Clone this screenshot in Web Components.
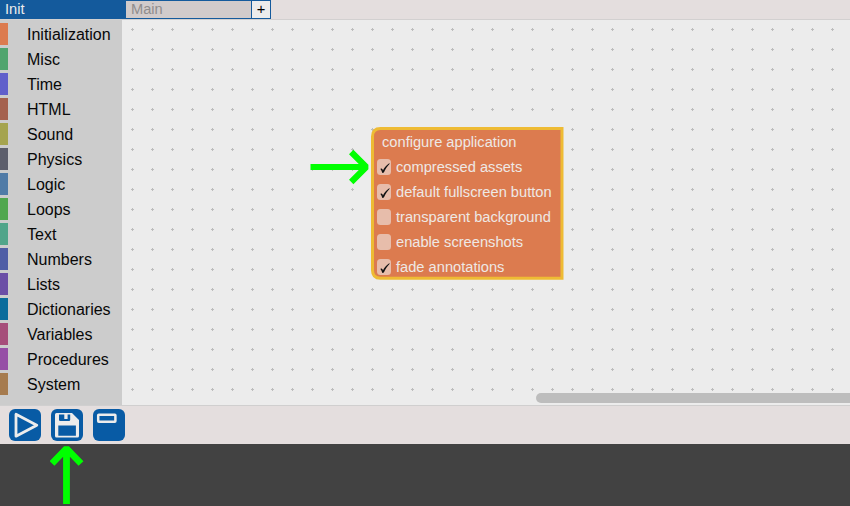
<!DOCTYPE html>
<html lang="en"><head><meta charset="utf-8"><title>Block editor</title>
<style>html,body{margin:0;height:100%;overflow:hidden;background:#424242}body{font-family:"Liberation Sans",Arial,sans-serif}</style>
</head><body>
<editor-app></editor-app>
<script>
class Base extends HTMLElement{
  constructor(){super();this.attachShadow({mode:'open'});}
  connectedCallback(){this.shadowRoot.innerHTML=this.render();}
}
customElements.define('tab-bar',class extends Base{render(){return `
<style>:host{display:flex;height:19px;background:#e4dede;border-bottom:1px solid #d2d0d0;font-size:14.67px;line-height:18px}
div{box-sizing:border-box;height:19px}
.on{width:125px;background:#145a9c;color:#ececec;padding-left:5px}
.off{width:127px;background:#d1cbcb;color:#8f8d8d;border:1px solid #145a9c;padding-left:5px;line-height:16px}
.add{width:19px;background:#ececec;color:#000;border:1px solid #145a9c;border-left:0;text-align:center;line-height:16px}
</style><div class="on">Init</div><div class="off">Main</div><div class="add">+</div>`}});

customElements.define('category-item',class extends Base{render(){return `
<style>:host{display:flex;height:22px;margin-bottom:3px;font-size:16px;line-height:24px;color:#080808;white-space:nowrap}
i{width:8px;height:22px;margin-right:19px;background:${this.getAttribute('color')}}</style><i></i><slot></slot>`}});

customElements.define('category-list',class extends Base{render(){
const c=[['Initialization','#dc7b4f'],['Misc','#50a56e'],['Time','#605fcb'],['HTML','#a5614e'],['Sound','#a5a44e'],['Physics','#5c5e6b'],['Logic','#507ba7'],['Loops','#50a74e'],['Text','#50a58a'],['Numbers','#4f5ea6'],['Lists','#6b4ea6'],['Dictionaries','#0a6c9c'],['Variables','#a64e7a'],['Procedures','#964fa6'],['System','#a67b4e']];
return `<style>:host{display:block;box-sizing:border-box;width:122px;height:386px;padding-top:3px;background:#ccc}</style>`+c.map(x=>`<category-item color="${x[1]}">${x[0]}</category-item>`).join('')}});

customElements.define('check-row',class extends Base{render(){return `
<style>:host{display:flex;align-items:center;height:25px;gap:5px;white-space:nowrap}
svg{display:block;width:14px;height:16px;background:#e7bdab;border-radius:3.5px}</style>
<svg viewBox="0 0 14 16">${this.hasAttribute('checked')?'<path d="M3.4 10C4.8 9 5.4 9.8 5.9 11.4C7.2 9 9 6.4 12.2 4.2L12.7 4.8C10.2 7.4 8.4 10 6.9 13.4L5.3 14C4.9 12.4 4.5 11.3 3.4 10Z" fill="#111"/>':''}</svg><slot></slot>`}});

customElements.define('config-block',class extends Base{render(){return `
<style>:host{display:block;box-sizing:border-box;width:192.5px;height:153px;color:#eee8e5;font-size:14.67px}
.shape{position:absolute;left:0;top:0}
.rows{position:relative;padding:3px 0 0 6.5px}
.title{height:24px;line-height:24px;padding-left:5px;white-space:nowrap}</style>
<svg class="shape" width="193" height="153"><path d="M9.5 1.5H191V151.3H9.5Q1.5 151.3 1.5 143.3V9.5Q1.5 1.5 9.5 1.5Z" fill="#dc7b4f" stroke="#eebb34" stroke-width="3"/></svg>
<div class="rows"><div class="title">configure application</div><slot></slot></div>`}});

customElements.define('block-canvas',class extends Base{render(){return `
<style>:host{display:block;position:relative;flex:1;height:385px;background:#ececec;overflow:hidden}
.grid{display:block;width:100%;height:100%}
config-block{position:absolute;left:248.5px;top:107px}
.bar{position:absolute;left:414.4px;right:-10px;top:373px;height:10px;border-radius:5px;background:#bdbdbd}</style>
<svg class="grid"><defs><pattern id="g" x="0" y="0" width="20" height="20" patternUnits="userSpaceOnUse"><path d="M9 9.5H12M10.5 8V11" stroke="#bdbdbd"/></pattern></defs><rect width="720" height="380" fill="url(#g)"/></svg>
<config-block><check-row checked>compressed assets</check-row><check-row checked>default fullscreen button</check-row><check-row>transparent background</check-row><check-row>enable screenshots</check-row><check-row checked>fade annotations</check-row></config-block>
<div class="bar"></div>`}});

customElements.define('tool-button',class extends Base{render(){
const p={run:'<path d="M7 5.3V27.2L27.8 16.2Z" fill="none" stroke="#ececec" stroke-width="2.8" stroke-linejoin="round"/>',
save:'<path fill="#ececec" fill-rule="evenodd" d="M5.5 4H21L28 11V27Q28 28.5 26.5 28.5H5.5Q4 28.5 4 27V5.5Q4 4 5.5 4ZM8 5.6V10.8Q8 12 9.2 12H18Q19.2 12 19.2 10.8V5.6H16.6V10H13.3V5.6ZM7.3 16.5V26.8H24.9V16.5Z"/>',
window:'<rect x="5.2" y="5.7" width="17.2" height="7" rx=".6" fill="none" stroke="#ececec" stroke-width="2.5"/>'};
return `<style>:host{display:block;width:32px;height:32px;background:#085ba5;border-radius:6px}svg{display:block}</style><svg width="32" height="32" viewBox="0 0 32 32">${p[this.getAttribute('kind')]}</svg>`}});

customElements.define('tool-bar',class extends Base{render(){return `
<style>:host{display:flex;box-sizing:border-box;height:39px;gap:10px;padding:3px 9px;border-top:1px solid #d0cfcf;background:#e4dede}</style>
<tool-button kind="run"></tool-button><tool-button kind="save"></tool-button><tool-button kind="window"></tool-button>`}});

customElements.define('green-arrow',class extends Base{render(){const up=this.hasAttribute('up');return `
<style>:host{display:block;position:absolute}svg{display:block}</style>`+(up?
`<svg width="36" height="62" viewBox="0 0 36 62"><path d="M16.5 60V5M2 19.5L16.5 4.5L31 19.5" fill="none" stroke="#0f0" stroke-width="6.8" stroke-linejoin="bevel"/></svg>`:
`<svg width="62" height="36" viewBox="0 0 62 36"><path d="M.5 18H57M41.2 3L56.2 18L41.2 33" fill="none" stroke="#0f0" stroke-width="6.2" stroke-linejoin="bevel"/></svg>`)}});

customElements.define('editor-app',class extends Base{render(){return `
<style>:host{display:block;position:relative;width:850px;height:506px;background:#424242;overflow:hidden}
.mid{display:flex;height:385px}category-list{height:385px}
.a{left:310px;top:149px}.b{left:50px;top:444px}</style>
<tab-bar></tab-bar><div class="mid"><category-list></category-list><block-canvas></block-canvas></div><tool-bar></tool-bar>
<green-arrow class="a"></green-arrow><green-arrow up class="b"></green-arrow>`}});
</script></body></html>
